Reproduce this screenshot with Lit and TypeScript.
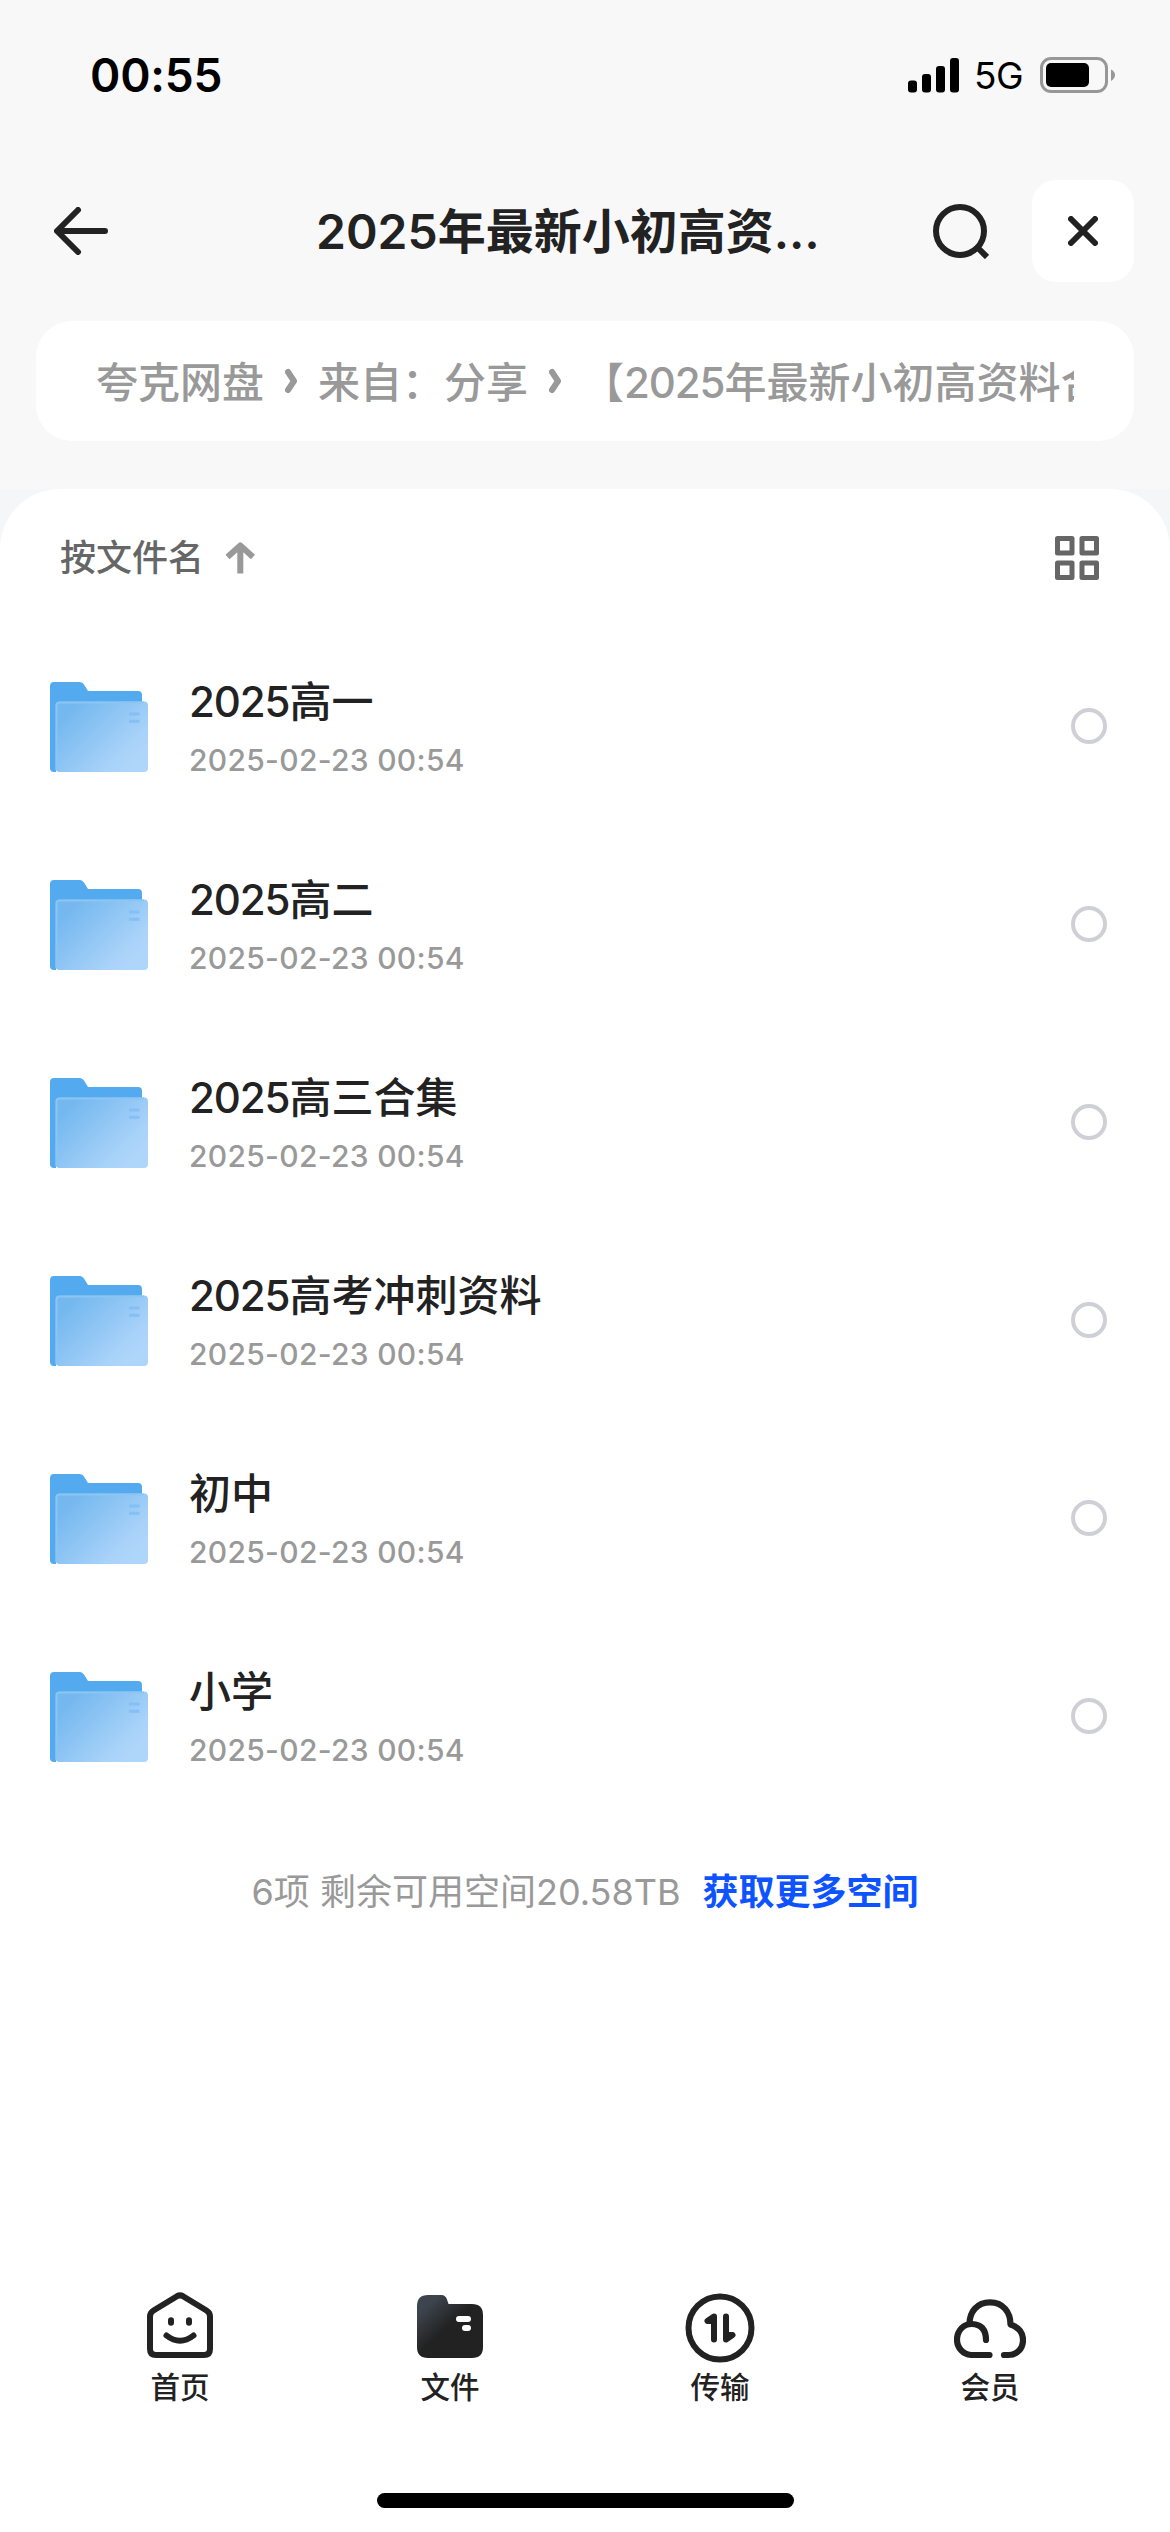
import { LitElement, html, css, svg } from "lit";
import { customElement, property } from "lit/decorators.js";

interface FileEntry {
  name: string;
  date: string;
}

const FILES: FileEntry[] = [
  "2025高一",
  "2025高二",
  "2025高三合集",
  "2025高考冲刺资料",
  "初中",
  "小学",
].map((name) => ({ name, date: "2025-02-23 00:54" }));

/** Wraps Latin digits and letters so that their tracking can differ from the Chinese text. */
const mixed = (text: string) =>
  text
    .split(/([0-9A-Za-z.]+)/)
    .filter((part) => part !== "")
    .map((part) => (/^[0-9A-Za-z.]/.test(part) ? html`<span class="latin">${part}</span>` : part));

const TABS = [
  {
    label: "首页",
    icon: svg`
      <g fill="none" stroke="#222" stroke-width="6" stroke-linecap="round" stroke-linejoin="round">
        <path d="M33 6.200Q36 4.500 39 6.200L62.500 20.500Q66 22.600 66 26.500V59Q66 65 60 65H12Q6 65 6 59V26.500Q6 22.600 9.500 20.500Z"/>
        <path d="M27 30.300v2.500M45 30.300v2.500"/>
        <path d="M22.500 45.500Q36 56 49.500 45.500"/>
      </g>`,
  },
  {
    label: "文件",
    icon: svg`
      <defs>
        <linearGradient id="tab-file" gradientUnits="userSpaceOnUse" x1="10" y1="12" x2="33" y2="37">
          <stop offset="0.150" stop-color="#3d444d"/><stop offset="1" stop-color="#222"/>
        </linearGradient>
      </defs>
      <path fill="url(#tab-file)" d="M14 5H27.500Q31.500 5 33 9.500L34.500 14H58Q69 14 69 25V57Q69 68 58 68H14Q3 68 3 57V16Q3 5 14 5Z"/>
      <rect x="42" y="26" width="15" height="6" rx="3" fill="#fff"/>
      <rect x="48" y="35" width="9" height="6" rx="3" fill="#fff"/>`,
  },
  {
    label: "传输",
    icon: svg`
      <circle cx="36" cy="38" r="31.500" fill="none" stroke="#222" stroke-width="6"/>
      <g fill="#222" stroke="#222" stroke-width="6" stroke-linecap="round" stroke-linejoin="round">
        <path d="M30 49.500V26.500L23.500 31H30"/>
        <path d="M42 26.500V49.500L48.500 45H42"/>
      </g>`,
  },
  {
    label: "会员",
    icon: svg`
      <g fill="none" stroke="#222" stroke-width="6.200" stroke-linecap="round" stroke-linejoin="round">
        <path d="M35.500 65H17A14.500 15.500 0 1 1 18 34Q32 34.500 32 50"/>
        <path d="M15.500 34C15.500 22 23 12.300 36 12.300S56.500 22 56.500 34.500C64 37 69 42 69 50C69 58.500 63 65 54.500 65H50"/>
      </g>`,
  },
];

const baseText = css`
  :host {
    display: block;
    font-family: Inter, "Noto Sans CJK SC", sans-serif;
    color: #222;
  }
  svg {
    display: block;
    flex: none;
  }
`;

@customElement("status-bar")
export class StatusBar extends LitElement {
  static styles = [
    baseText,
    css`
      .bar {
        display: flex;
        align-items: center;
        height: 150px;
        padding: 0 54px 0 90px;
        color: #000;
        box-sizing: border-box;
      }
      .time {
        flex: 1;
        font-size: 46px;
        font-weight: 600;
        letter-spacing: -0.2px;
      }
      .network {
        margin: 1px 17px 0 15px;
        font-size: 37px;
        font-weight: 400;
        letter-spacing: -0.6px;
      }
    `,
  ];

  render() {
    return html`
      <div class="bar">
        <span class="time">00:55</span>
        <svg width="51" height="36" viewBox="0 0 51 36">
          <rect x="0" y="23.500" width="9" height="12" rx="3" />
          <rect x="14" y="17" width="9" height="18.500" rx="3" />
          <rect x="28" y="9" width="9" height="26.500" rx="3" />
          <rect x="42" y="1" width="9" height="34.500" rx="3" />
        </svg>
        <span class="network">5G</span>
        <svg width="76" height="36" viewBox="0 0 76 36">
          <rect x="1.500" y="1.500" width="65" height="33" rx="9.500" fill="none" stroke="#979797" stroke-width="3" />
          <rect x="6" y="6" width="43" height="24" rx="5" />
          <path d="M71 12.500Q75 14.500 75 18T71 24Z" fill="#979797" />
        </svg>
      </div>
    `;
  }
}

@customElement("nav-header")
export class NavHeader extends LitElement {
  @property() heading = "";

  static styles = [
    baseText,
    css`
      .row {
        display: flex;
        align-items: center;
        height: 162px;
        padding: 0 36px 0 54px;
        box-sizing: border-box;
      }
      .title {
        flex: 1;
        padding-left: 208px;
        padding-top: 2px;
        font-size: 48px;
        font-weight: 600;
        line-height: 72px;
        white-space: nowrap;
      }
      .search {
        margin-right: 43px;
      }
      .close {
        display: flex;
        align-items: center;
        justify-content: center;
        width: 102px;
        height: 102px;
        border-radius: 24px;
        background: #fff;
      }
    `,
  ];

  render() {
    return html`
      <div class="row">
        <svg width="54" height="48" viewBox="0 0 54 48" fill="none" stroke="#222" stroke-width="6" stroke-linecap="round" stroke-linejoin="round">
          <path d="M24 3L3 24L24 45M4 24H51" />
        </svg>
        <span class="title">${mixed(this.heading)}</span>
        <svg class="search" width="56" height="56" viewBox="0 0 56 56" fill="none" stroke="#222" stroke-width="6">
          <circle cx="27" cy="28" r="24" />
          <path d="M44 44L54 54" />
        </svg>
        <div class="close">
          <svg width="30" height="30" viewBox="0 0 30 30" stroke="#222" stroke-width="6" stroke-linecap="round">
            <path d="M3 3L27 27M27 3L3 27" />
          </svg>
        </div>
      </div>
    `;
  }
}

@customElement("path-bar")
export class PathBar extends LitElement {
  static styles = [
    baseText,
    css`
      .pill {
        height: 120px;
        margin: 0 36px;
        padding: 0 60px;
        border-radius: 36px;
        background: #fff;
        box-sizing: border-box;
      }
      .track {
        display: flex;
        align-items: center;
        height: 116px;
        overflow: hidden;
        font-size: 42px;
        font-weight: 500;
        color: #999;
        white-space: nowrap;
      }
      .sep {
        margin: 4px 20px 0;
      }
      .latin {
        letter-spacing: -1.1px;
      }
    `,
  ];

  render() {
    const sep = html`<svg class="sep" width="14" height="28" viewBox="0 0 14 28" fill="none" stroke="#999" stroke-width="6" stroke-linecap="round" stroke-linejoin="round">
      <path d="M4 5L10 14L4 23" />
    </svg>`;
    return html`
      <div class="pill">
        <div class="track">
          <span>夸克网盘</span>${sep}<span>来自：分享</span>${sep}<span>${mixed("【2025年最新小初高资料合集】")}</span>
        </div>
      </div>
    `;
  }
}

@customElement("file-row")
export class FileRow extends LitElement {
  @property({ attribute: false }) entry!: FileEntry;

  static styles = [
    baseText,
    css`
      .row {
        display: flex;
        align-items: center;
        height: 198px;
        padding: 0 63px 0 50px;
        box-sizing: border-box;
      }
      .folder {
        margin-top: 2px;
      }
      .info {
        flex: 1;
        display: flex;
        flex-direction: column;
        padding-left: 41px;
      }
      .name {
        font-size: 42px;
        font-weight: 500;
        line-height: 62px;
      }
      .name .latin {
        letter-spacing: -1.1px;
      }
      .date {
        font-size: 30px;
        font-weight: 500;
        line-height: 44px;
        margin-top: 5px;
        color: #999;
        letter-spacing: 0.3px;
      }
      .check {
        width: 36px;
        height: 36px;
        border: 4px solid #cfcfd6;
        border-radius: 50%;
        box-sizing: border-box;
      }
    `,
  ];

  render() {
    return html`
      <div class="row">
        <svg class="folder" width="98" height="90" viewBox="0 0 98 90">
          <defs>
            <linearGradient id="front" gradientUnits="userSpaceOnUse" x1="20" y1="28" x2="78" y2="86">
              <stop offset="0" stop-color="#74b8ef" />
              <stop offset="0.850" stop-color="#aad3f9" />
              <stop offset="1" stop-color="#aed5fa" />
            </linearGradient>
          </defs>
          <path d="M4 0H30Q32.500 0 34 2.500L38 9H88Q92 9 92 13V80H6V90H4Q0 90 0 86V4Q0 0 4 0Z" fill="#54aaee" />
          <rect x="5.500" y="19.500" width="92.500" height="70.500" rx="4" fill="url(#front)" />
          <path d="M6.500 88V23.500Q6.500 20.500 9.500 20.500H94" fill="none" stroke="#8cc5f3" stroke-width="2" />
          <path d="M79 32H89.500M79 39.300H89.500" stroke="#84bff5" stroke-width="3" />
        </svg>
        <div class="info">
          <span class="name">${mixed(this.entry.name)}</span>
          <span class="date">${this.entry.date}</span>
        </div>
        <span class="check"></span>
      </div>
    `;
  }
}

@customElement("tab-bar")
export class TabBar extends LitElement {
  static styles = [
    baseText,
    css`
      .tabs {
        display: grid;
        grid-template-columns: repeat(4, 1fr);
        padding: 0 45px;
      }
      .tab {
        display: flex;
        flex-direction: column;
        align-items: center;
        gap: 1px;
        font-size: 29.5px;
        font-weight: 500;
        line-height: 44px;
      }
    `,
  ];

  render() {
    return html`
      <div class="tabs">
        ${TABS.map(
          (tab) => html`
            <div class="tab">
              <svg width="72" height="74" viewBox="0 0 72 74">${tab.icon}</svg>
              <span>${tab.label}</span>
            </div>
          `,
        )}
      </div>
    `;
  }
}

@customElement("app-root")
export class AppRoot extends LitElement {
  static styles = [
    baseText,
    css`
      .screen {
        display: flex;
        flex-direction: column;
        width: 1170px;
        height: 2532px;
        background: #f4f6f8;
        overflow: hidden;
      }
      .top {
        height: 489px;
        flex: none;
        background: #f8f8f8;
      }
      .nav {
        margin-bottom: 9px;
      }
      .sheet {
        flex: 1;
        display: flex;
        flex-direction: column;
        border-radius: 60px 60px 0 0;
        background: #fff;
      }
      .sort {
        display: flex;
        align-items: center;
        height: 138px;
        padding: 0 71px 0 60px;
        box-sizing: border-box;
      }
      .sort-label {
        font-size: 36px;
        font-weight: 500;
        color: #666;
        margin: 0 21px 6px 0;
      }
      .grid-icon {
        margin-left: auto;
      }
      .summary {
        display: flex;
        justify-content: center;
        gap: 22px;
        margin-top: 50px;
        font-size: 36px;
        line-height: 54px;
        white-space: pre;
        color: #999;
      }
      .more {
        font-weight: 700;
        color: #0d53ff;
      }
      .bottom {
        margin-top: auto;
      }
      .home-indicator {
        width: 417px;
        height: 15px;
        margin: 84px auto 24px;
        border-radius: 8px;
        background: #000;
      }
    `,
  ];

  render() {
    return html`
      <div class="screen">
        <div class="top">
          <status-bar></status-bar>
          <nav-header class="nav" heading="2025年最新小初高资…"></nav-header>
          <path-bar></path-bar>
        </div>
        <div class="sheet">
          <div class="sort">
            <span class="sort-label">按文件名</span>
            <svg width="31" height="34" viewBox="0 0 31 34" fill="none" stroke="#999" stroke-width="6" stroke-linejoin="round">
              <path d="M2.500 16L15.300 4.500L28 16M15.300 5V32.500" />
            </svg>
            <svg class="grid-icon" width="44" height="44" viewBox="0 0 44 44" fill="none" stroke="#666" stroke-width="5" stroke-linejoin="round">
              <path d="M2.500 2.500h14.500v14.500h-14.500zM27 2.500h14.500v14.500h-14.500zM2.500 27h14.500v14.500h-14.500zM27 27h14.500v14.500h-14.500z" />
            </svg>
          </div>
          ${FILES.map((entry) => html`<file-row .entry=${entry}></file-row>`)}
          <div class="summary"><span>6项 剩余可用空间20.58TB</span><span class="more">获取更多空间</span></div>
          <div class="bottom">
            <tab-bar></tab-bar>
            <div class="home-indicator"></div>
          </div>
        </div>
      </div>
    `;
  }
}
